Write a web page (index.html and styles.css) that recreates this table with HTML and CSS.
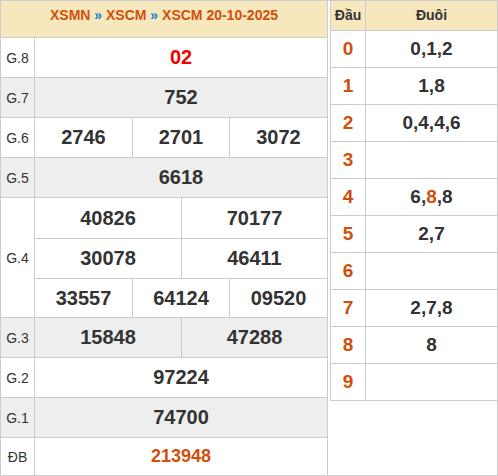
FILE: index.html
```html
<!DOCTYPE html>
<html lang="vi">
<head>
<meta charset="utf-8">
<title>XSCM 20-10-2025</title>
<link rel="stylesheet" href="styles.css">
</head>
<body>
<div class="wrap">
  <div class="kq">
    <div class="head"><span>XSMN</span> <b class="sep">»</b> <span>XSCM</span> <b class="sep">»</b> <span>XSCM 20-10-2025</span></div>
    <div class="row">
      <div class="lbl">G.8</div>
      <div class="cells one"><div class="num red">02</div></div>
    </div>
    <div class="row alt">
      <div class="lbl">G.7</div>
      <div class="cells one"><div class="num">752</div></div>
    </div>
    <div class="row">
      <div class="lbl">G.6</div>
      <div class="cells three"><div class="num">2746</div><div class="num">2701</div><div class="num">3072</div></div>
    </div>
    <div class="row alt">
      <div class="lbl">G.5</div>
      <div class="cells one"><div class="num">6618</div></div>
    </div>
    <div class="row g4">
      <div class="lbl">G.4</div>
      <div class="stack">
        <div class="cells two"><div class="num">40826</div><div class="num">70177</div></div>
        <div class="cells two"><div class="num">30078</div><div class="num">46411</div></div>
        <div class="cells three"><div class="num">33557</div><div class="num">64124</div><div class="num">09520</div></div>
      </div>
    </div>
    <div class="row alt">
      <div class="lbl">G.3</div>
      <div class="cells two"><div class="num">15848</div><div class="num">47288</div></div>
    </div>
    <div class="row">
      <div class="lbl">G.2</div>
      <div class="cells one"><div class="num">97224</div></div>
    </div>
    <div class="row alt">
      <div class="lbl">G.1</div>
      <div class="cells one"><div class="num">74700</div></div>
    </div>
    <div class="row last">
      <div class="lbl">ĐB</div>
      <div class="cells one"><div class="num orange">213948</div></div>
    </div>
  </div>
  <div class="lt">
    <div class="lt-head"><div class="dau">Đầu</div><div class="duoi">Đuôi</div></div>
    <div class="lt-row"><div class="dau">0</div><div class="duoi">0,1,2</div></div>
    <div class="lt-row"><div class="dau">1</div><div class="duoi">1,8</div></div>
    <div class="lt-row"><div class="dau">2</div><div class="duoi">0,4,4,6</div></div>
    <div class="lt-row"><div class="dau">3</div><div class="duoi"></div></div>
    <div class="lt-row"><div class="dau">4</div><div class="duoi">6,<span class="hl">8</span>,8</div></div>
    <div class="lt-row"><div class="dau">5</div><div class="duoi">2,7</div></div>
    <div class="lt-row"><div class="dau">6</div><div class="duoi"></div></div>
    <div class="lt-row"><div class="dau">7</div><div class="duoi">2,7,8</div></div>
    <div class="lt-row"><div class="dau">8</div><div class="duoi">8</div></div>
    <div class="lt-row"><div class="dau">9</div><div class="duoi"></div></div>
  </div>
</div>
</body>
</html>
```

FILE: styles.css
```css
* { box-sizing: border-box; }
html, body { margin: 0; padding: 0; background: #fff; }
body { font-family: "Liberation Sans", Arial, sans-serif; color: #333; }

.wrap {
  display: flex;
  gap: 2px;
  width: 498px;
  height: 476px;
  border: 1px solid #ccc;
}

.kq {
  width: 327px;
  flex: none;
  display: flex;
  flex-direction: column;
  border-right: 1px solid #ccc;
}

.head {
  height: 37px;
  flex: none;
  background: #f6e7bd;
  border-bottom: 1px solid #ccc;
  text-align: center;
  font-weight: bold;
  font-size: 14px;
  line-height: 20px;
  padding-top: 4px;
  color: #d14f0a;
}
.head .sep { color: #1a7ed3; }

.row {
  display: flex;
  height: 40px;
  flex: none;
  border-bottom: 1px solid #ccc;
}
.row.alt { background: #eee; }
.row.g4 { height: 120px; }
.row.last { height: 37px; border-bottom: none; }

.lbl {
  width: 34px;
  flex: none;
  border-right: 1px solid #ccc;
  display: flex;
  align-items: center;
  justify-content: center;
  font-size: 14px;
  color: #333;
}

.stack {
  flex: 1;
  display: flex;
  flex-direction: column;
}
.stack .cells { height: 40px; flex: none; }
.stack .cells + .cells { border-top: 1px solid #ccc; }
.stack .cells:last-child { height: 39px; }

.cells {
  flex: 1;
  display: grid;
}
.cells.one { grid-template-columns: 1fr; }
.cells.two { grid-template-columns: 147px 1fr; }
.cells.three { grid-template-columns: 98px 97px 1fr; }

.num {
  display: flex;
  align-items: center;
  justify-content: center;
  font-weight: bold;
  font-size: 20px;
  color: #333;
}
.cells.two .num:not(:last-child),
.cells.three .num:not(:last-child) { border-right: 1px solid #ccc; }
.num.red { color: #f00000; }
.num.orange { color: #d14f0a; font-size: 18px; }

.lt {
  flex: 1;
  align-self: flex-start;
  border-left: 1px solid #ccc;
}
.lt-head, .lt-row {
  display: flex;
  border-bottom: 1px solid #ccc;
}
.lt-head {
  height: 30px;
  background: #f6e7bd;
  font-weight: bold;
  font-size: 14px;
  color: #333;
}
.lt-row { height: 37px; }
.dau {
  width: 35px;
  flex: none;
  border-right: 1px solid #ccc;
  display: flex;
  align-items: center;
  justify-content: center;
}
.duoi {
  flex: 1;
  display: flex;
  align-items: center;
  justify-content: center;
}
.lt-row .dau { color: #d14f0a; font-weight: bold; font-size: 19px; }
.lt-row .duoi { color: #333; font-weight: bold; font-size: 19px; }
.lt-head .dau, .lt-head .duoi { padding-bottom: 2px; }
.hl { color: #d14f0a; }
```
